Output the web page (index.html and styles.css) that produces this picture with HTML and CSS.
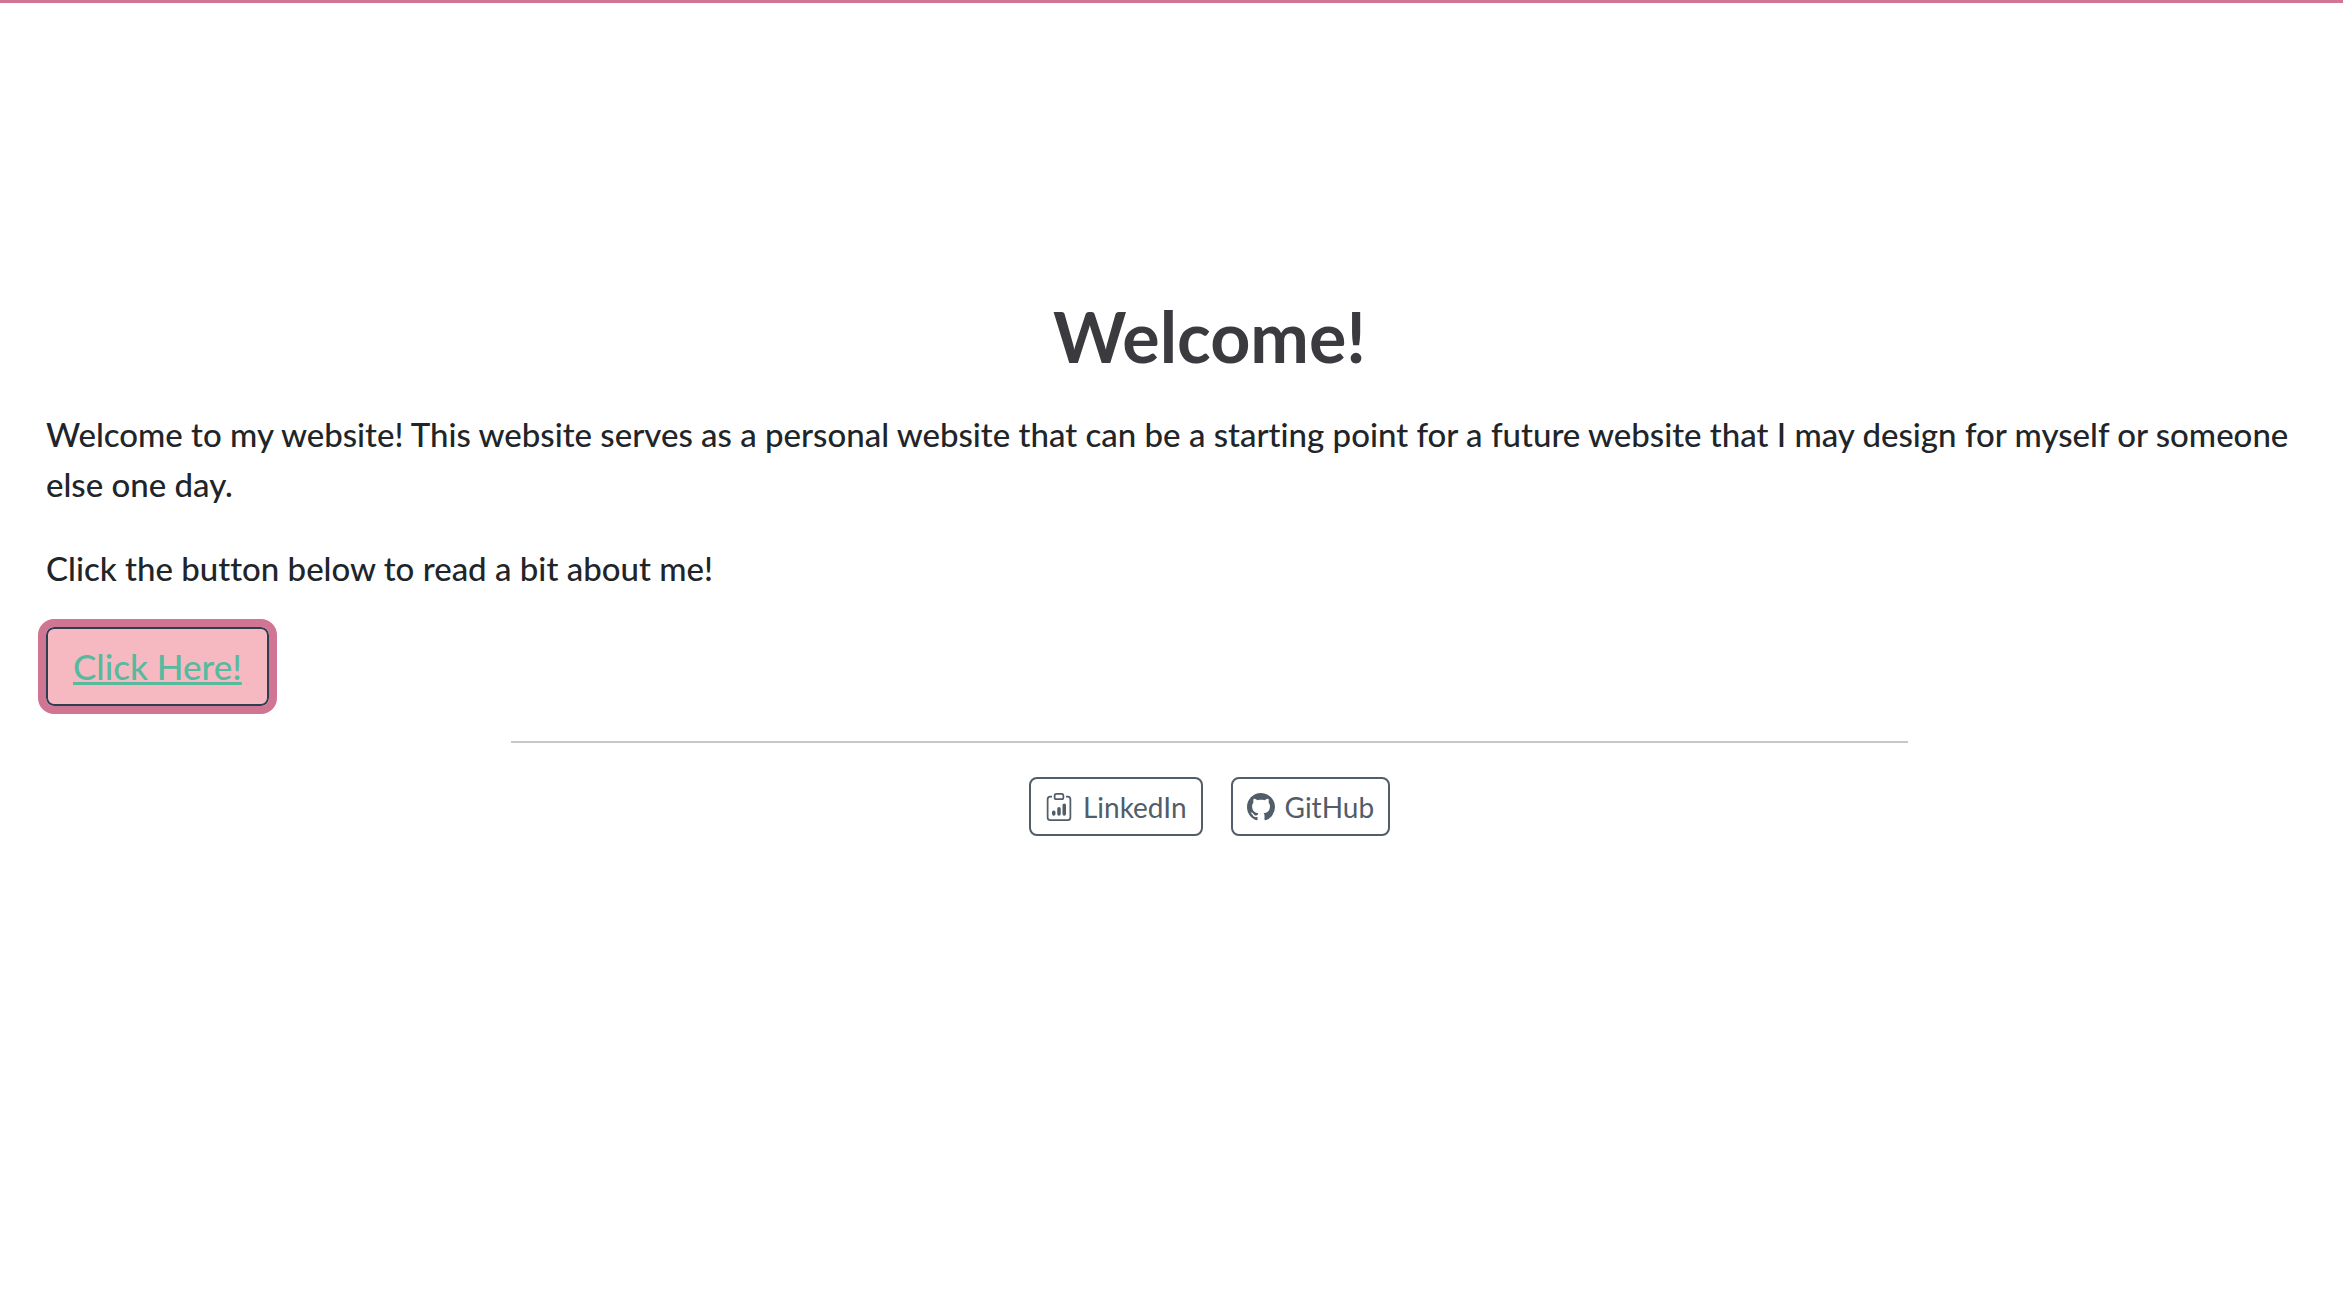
FILE: index.html
```html
<!DOCTYPE html>
<html lang="en">
<head>
<meta charset="utf-8">
<title>Welcome!</title>
<link rel="stylesheet" href="styles.css">
</head>
<body>
<main class="content">
<h1 class="title">Welcome!</h1>
<p class="text">Welcome to my website! This website serves as a personal website that can be a starting point for a future website that I may design for myself or someone else one day.</p>
<p class="text">Click the button below to read a bit about me!</p>
<button class="cta" type="button"><a class="cta-link" href="#about">Click Here!</a></button>
<hr class="rule">
<nav class="links" aria-label="Profiles">
<a class="link" href="#linkedin"><svg class="icon" viewBox="0 0 16 16" fill="currentColor" aria-hidden="true"><path d="M4 11a1 1 0 1 1 2 0v1a1 1 0 1 1-2 0v-1zm6-4a1 1 0 1 1 2 0v5a1 1 0 1 1-2 0V7zM7 9a1 1 0 0 1 2 0v3a1 1 0 1 1-2 0V9z"/><path d="M4 1.500H3a2 2 0 0 0-2 2V14a2 2 0 0 0 2 2h10a2 2 0 0 0 2-2V3.500a2 2 0 0 0-2-2h-1v1h1a1 1 0 0 1 1 1V14a1 1 0 0 1-1 1H3a1 1 0 0 1-1-1V3.500a1 1 0 0 1 1-1h1v-1z"/><path d="M9.500 1a.5.5 0 0 1 .5.5v1a.5.5 0 0 1-.5.5h-3a.5.5 0 0 1-.5-.5v-1a.5.5 0 0 1 .5-.5h3zm-3-1A1.500 1.500 0 0 0 5 1.500v1A1.500 1.500 0 0 0 6.500 4h3A1.500 1.500 0 0 0 11 2.500v-1A1.500 1.500 0 0 0 9.500 0h-3z"/></svg>LinkedIn</a>
<a class="link" href="#github"><svg class="icon" viewBox="0 0 16 16" fill="currentColor" aria-hidden="true"><path d="M8 0C3.580 0 0 3.580 0 8c0 3.540 2.290 6.530 5.470 7.590.4.070.55-.17.55-.38 0-.19-.01-.82-.01-1.490-2.010.37-2.530-.49-2.690-.94-.09-.23-.48-.94-.82-1.130-.28-.15-.68-.52-.01-.53.63-.01 1.080.58 1.230.82.72 1.210 1.870.87 2.330.66.070-.52.28-.87.51-1.070-1.780-.2-3.640-.89-3.640-3.950 0-.87.31-1.590.82-2.150-.08-.2-.36-1.020.08-2.120 0 0 .67-.21 2.200.82.64-.18 1.320-.27 2-.27s1.360.09 2 .27c1.530-1.040 2.200-.82 2.200-.82.44 1.100.16 1.920.08 2.120.51.56.82 1.270.82 2.150 0 3.070-1.870 3.750-3.650 3.950.29.25.54.73.54 1.480 0 1.070-.01 1.930-.01 2.200 0 .21.15.46.55.38A8.010 8.010 0 0 0 16 8c0-4.420-3.580-8-8-8z"/></svg>GitHub</a>
</nav>
</main>
</body>
</html>
```

FILE: styles.css
```css
* { box-sizing: border-box; }
html { overflow-x: hidden; }
body {
  margin: 0;
  border-top: 3px solid #d07693;
  background: #fff;
  color: #212529;
  font: 33px/50px Lato, sans-serif;
  font-variant-ligatures: none;
}
.content {
  margin-right: -30px;
  padding: 297px 0 48px 46px;
}
.title {
  margin: 0 0 37px;
  color: #3a3a3f;
  font-size: 70px;
  font-weight: 700;
  line-height: 72px;
  text-align: center;
}
.text {
  margin: 0 0 34px;
  padding-right: 46px;
  font-weight: 500;
}
.cta {
  display: block;
  margin: 0;
  padding: 12px 25px 13px;
  border: 2px solid #2c3e50;
  border-radius: 8px;
  outline: 8px solid #d07693;
  background: #f6b9c1;
  font: inherit;
  font-size: 35px;
  font-weight: 500;
}
.cta-link { color: #56ba9f; }
.rule {
  width: 60%;
  margin: 35px auto 34px;
  border: 0;
  border-top: 2px solid #c8c8c8;
}
.links { display: flex; justify-content: center; gap: 28px; }
.link {
  display: flex;
  align-items: center;
  gap: 10px;
  height: 59px;
  padding: 0 14px;
  border: 2px solid #515d68;
  border-radius: 8px;
  color: #515d68;
  font-size: 28px;
  text-decoration: none;
}
.icon { width: 28px; height: 28px; }
```
